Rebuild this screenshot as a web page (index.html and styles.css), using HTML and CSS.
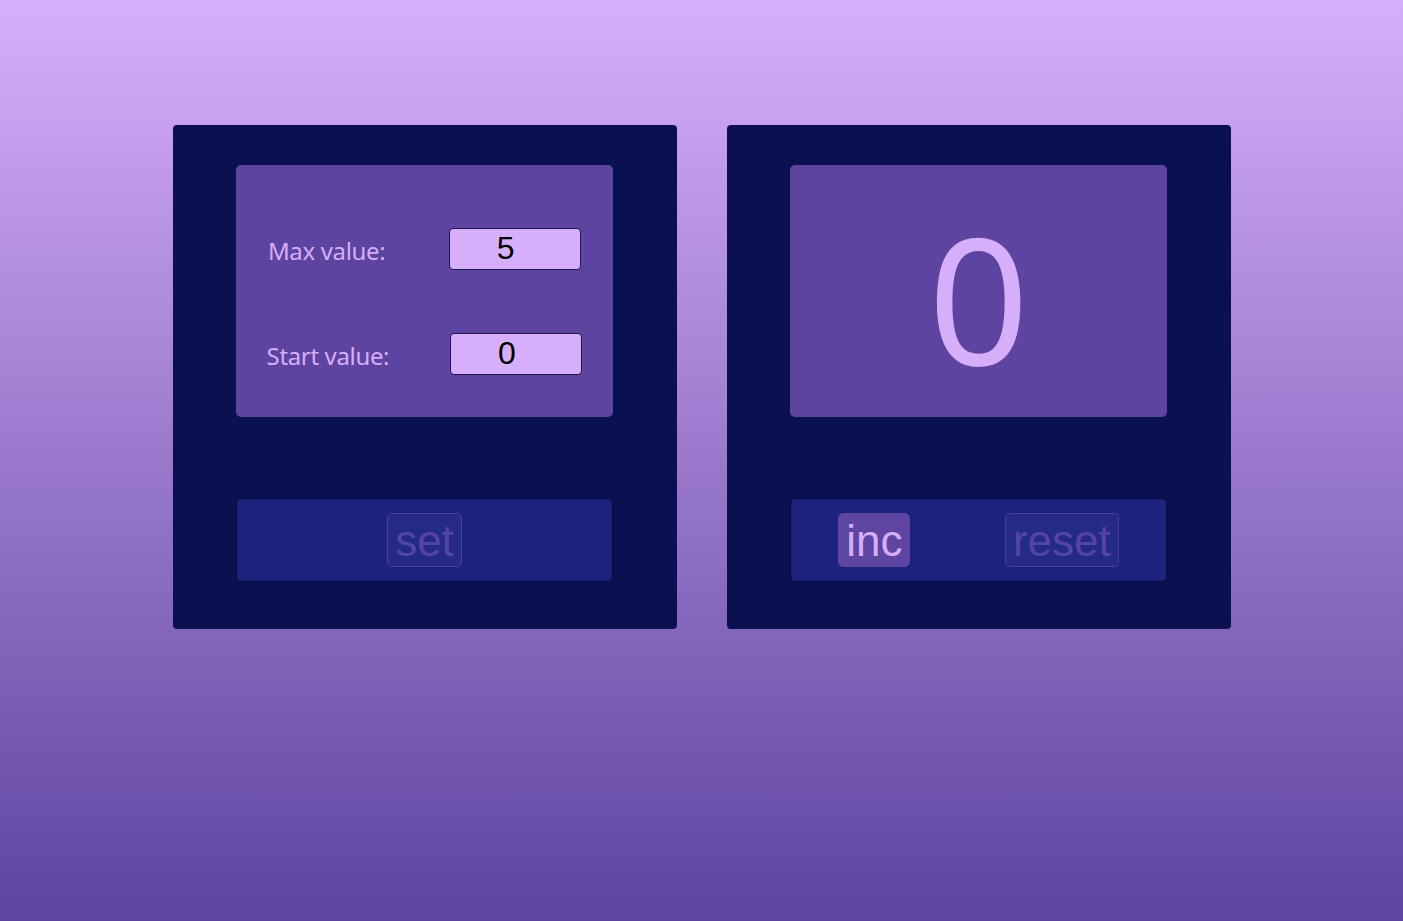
FILE: index.html
```html
<!DOCTYPE html>
<html lang="en">
<head>
<meta charset="utf-8">
<title>Counter</title>
<link rel="stylesheet" href="styles.css">
</head>
<body>
<div class="app">
  <div class="card">
    <div class="display settings">
      <div class="row">
        <span class="label">Max value:</span>
        <input class="num-input" type="text" value="5">
      </div>
      <div class="row">
        <span class="label">Start value:</span>
        <input class="num-input" type="text" value="0">
      </div>
    </div>
    <div class="bar">
      <button class="btn" disabled>set</button>
    </div>
  </div>
  <div class="card">
    <div class="display counter">
      <span class="count">0</span>
    </div>
    <div class="bar">
      <button class="btn active">inc</button>
      <button class="btn" disabled>reset</button>
    </div>
  </div>
</div>
</body>
</html>
```

FILE: styles.css
```css
html, body {
  margin: 0;
  padding: 0;
}

body {
  min-height: 100vh;
  background: linear-gradient(to bottom, #d7aefa 0%, #5d449f 100%);
  font-family: "Noto Sans", "Open Sans", sans-serif;
}

.app {
  display: flex;
  justify-content: center;
  gap: 50px;
  padding-top: 125px;
}

.card {
  width: 504px;
  height: 504px;
  box-sizing: border-box;
  background: #0b1150;
  border-radius: 4px;
  padding: 40px 0 47px;
  display: flex;
  flex-direction: column;
  align-items: center;
  gap: 81px;
}

.display {
  width: 377px;
  height: 252px;
  box-sizing: border-box;
  background: #5c44a0;
  border-radius: 5px;
}

.settings {
  display: flex;
  flex-direction: column;
  padding-top: 63px;
  gap: 63px;
}

.row {
  display: flex;
  justify-content: space-around;
  align-items: center;
  height: 42px;
}

.label {
  color: #d7aefa;
  font-size: 24px;
  letter-spacing: -0.35px;
  line-height: 30px;
  padding-top: 4px;
}

.num-input {
  width: 132px;
  height: 42px;
  box-sizing: border-box;
  background: #d7aefa;
  border: 1px solid #1e1450;
  border-radius: 4px;
  font-family: "Liberation Sans", Arial, sans-serif;
  font-size: 32px;
  text-align: center;
  color: #000;
  padding: 1px 20px 2px 1px;
  outline: none;
}

.counter {
  display: flex;
  justify-content: center;
  align-items: center;
  padding-top: 12px;
}

.count {
  color: #d7aefa;
  font-size: 176px;
  line-height: 176px;
}

.bar {
  width: 377px;
  height: 84px;
  box-sizing: border-box;
  background: #1c237e;
  border: 1px solid #060b33;
  border-radius: 5px;
  display: flex;
  justify-content: space-around;
  align-items: center;
}

.btn {
  font-family: "Liberation Sans", Arial, sans-serif;
  font-size: 44px;
  line-height: 44px;
  padding: 5px 7px 3px;
  border-radius: 5px;
  border: 1px solid #4c3ca8;
  background: #252a86;
  color: #5444a8;
  cursor: pointer;
}

.btn.active {
  background: #5e45a1;
  border-color: #5e45a1;
  color: #d7aefa;
}
```
